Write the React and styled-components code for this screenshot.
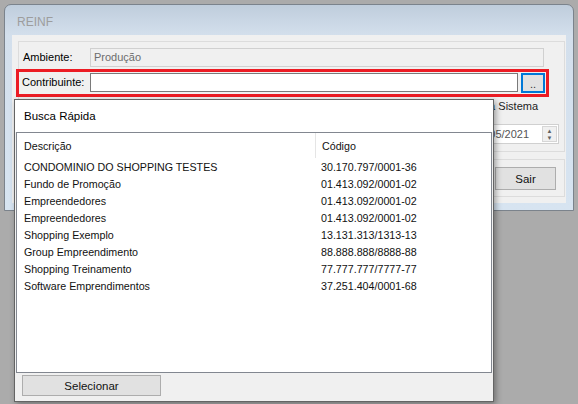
import styled, { createGlobalStyle } from "styled-components";

const GlobalStyle = createGlobalStyle`
  html, body { margin: 0; padding: 0; background: #ababab; }
  body {
    font-family: "Liberation Sans", Arial, sans-serif;
    font-size: 11px;
    color: #000;
  }
  * { box-sizing: border-box; }
`;

const companies = [
  ["CONDOMINIO DO SHOPPING TESTES", "30.170.797/0001-36"],
  ["Fundo de Promoção", "01.413.092/0001-02"],
  ["Empreendedores", "01.413.092/0001-02"],
  ["Empreendedores", "01.413.092/0001-02"],
  ["Shopping Exemplo", "13.131.313/1313-13"],
  ["Group Empreendimento", "88.888.888/8888-88"],
  ["Shopping Treinamento", "77.777.777/7777-77"],
  ["Software Emprendimentos", "37.251.404/0001-68"],
];

const Desktop = styled.div`
  position: relative;
  width: 578px;
  height: 404px;
  padding: 4px;
  overflow: hidden;
`;

const Window = styled.div`
  width: 570px;
  height: 207px;
  border: 1px solid #7b838c;
  border-radius: 7px 7px 0 0;
  background: linear-gradient(#bfcddc 0, #d3dfec 30px, #d7e4f1 100%);
  display: flex;
  flex-direction: column;
  padding: 0 7px 7px;
`;

const TitleBar = styled.div`
  height: 30px;
  display: flex;
  align-items: center;
  padding: 4px 0 0 5px;
  font-size: 12px;
  color: #9d9d9d;
`;

const Client = styled.div`
  flex: 1;
  background: #f0f0f0;
  padding: 6px 1px 6px 6px;
  display: flex;
  flex-direction: column;
  gap: 7px;
`;

const GroupBox = styled.div`
  border: 1px solid #dcdcdc;
  height: ${(p) => p.$h}px;
  display: flex;
  flex-direction: column;
`;

const FieldRow = styled.div`
  display: flex;
  align-items: flex-start;
  margin-top: ${(p) => p.$top}px;
  margin-right: ${(p) => (p.$highlight ? 18 : 0)}px;
  padding: ${(p) => (p.$highlight ? "1px 0 0 3px" : "0 0 0 4px")};
  height: ${(p) => (p.$highlight ? 22 : 19)}px;
  outline: ${(p) => (p.$highlight ? "3px solid #ec1c24" : "none")};
  gap: 3px;
`;

const Label = styled.div`
  width: ${(p) => p.$w}px;
  height: 19px;
  line-height: 19px;
  flex-shrink: 0;
`;

const TextBox = styled.div`
  width: ${(p) => p.$w}px;
  flex-shrink: 0;
  height: 19px;
  border: 1px solid ${(p) => (p.$disabled ? "#d0d0d0" : "#7a7a7a")};
  background: ${(p) => (p.$disabled ? "#f0f0f0" : "#fff")};
  color: #6d6d6d;
  line-height: 17px;
  padding-left: 3px;
  font-size: 11px;
`;

const DotsButton = styled.div`
  width: 24px;
  height: 20px;
  flex-shrink: 0;
  border: 2px solid #0078d7;
  background: #e1e1e1;
  display: flex;
  align-items: flex-end;
  justify-content: center;
  padding-bottom: 3px;
  font-size: 11px;
  line-height: 8px;
  color: #333;
`;

const SideColumn = styled.div`
  margin: 6px 0 0 451px;
  width: 89px;
  display: flex;
  flex-direction: column;
  gap: 11px;
`;

const SideLabel = styled.div`
  height: 13px;
  line-height: 13px;
  padding-left: 2px;
  color: #222;
  white-space: nowrap;
`;

const DateBox = styled.div`
  height: 20px;
  width: 89px;
  border: 1px solid #d0d0d0;
  background: #fff;
  display: flex;
  align-items: center;
  justify-content: space-between;
  padding: 0 1px 0 3px;
  color: #555;
`;

const Spinner = styled.div`
  width: 15px;
  height: 16px;
  border: 1px solid #d6d6d6;
  background: #f0f0f0;
  display: flex;
  flex-direction: column;
  align-items: center;
  justify-content: space-around;
  font-size: 6px;
  line-height: 6px;
  color: #606060;
`;

const LowerContent = styled.div`
  display: flex;
  justify-content: flex-end;
  padding: 7px 8px 0 0;
`;

const WinButton = styled.div`
  width: ${(p) => p.$w}px;
  height: ${(p) => p.$h}px;
  border: 1px solid #adadad;
  background: #e1e1e1;
  display: flex;
  align-items: center;
  justify-content: center;
  font-size: 11.5px;
  color: #111;
`;

const Popup = styled.div`
  position: absolute;
  left: 14px;
  top: 99px;
  width: 480px;
  height: 303px;
  border: 1px solid #646464;
  background: #f0f0f0;
  box-shadow: 2px 2px 6px rgba(0, 0, 0, 0.35);
  display: flex;
  flex-direction: column;
`;

const PopupHeader = styled.div`
  height: 32px;
  background: #fff;
  display: flex;
  align-items: center;
  padding-left: 9px;
  font-size: 11.5px;
`;

const List = styled.div`
  margin: 0 1px;
  height: 241px;
  border: 1px solid #828790;
  background: #fff;
`;

const Row = styled.div`
  display: grid;
  grid-template-columns: 298px 1fr;
  height: ${(p) => (p.$head ? 25 : 17)}px;
  align-items: center;
  font-size: 10.7px;
  color: #111;
`;

const Cell = styled.div`
  height: 100%;
  display: flex;
  align-items: center;
  padding-left: ${(p) => (p.$code ? 6 : 7)}px;
  border-left: ${(p) => (p.$divider ? "1px solid #e5e5e5" : "none")};
  white-space: nowrap;
`;

const Footer = styled.div`
  padding: 2px 0 0 7px;
`;

export default function App() {
  return (
    <>
      <GlobalStyle />
      <Desktop>
        <Window>
          <TitleBar>REINF</TitleBar>
          <Client>
            <GroupBox $h={111}>
              <FieldRow $top={6}>
                <Label $w={64}>Ambiente:</Label>
                <TextBox $w={454} $disabled>
                  Produção
                </TextBox>
              </FieldRow>
              <FieldRow $top={5} $highlight>
                <Label $w={65}>Contribuinte:</Label>
                <TextBox $w={428} />
                <DotsButton>..</DotsButton>
              </FieldRow>
              <SideColumn>
                <SideLabel>Data Sistema</SideLabel>
                <DateBox>
                  <span>01/05/2021</span>
                  <Spinner>
                    <span>▲</span>
                    <span>▼</span>
                  </Spinner>
                </DateBox>
              </SideColumn>
            </GroupBox>
            <GroupBox $h={38}>
              <LowerContent>
                <WinButton $w={61} $h={23}>Sair</WinButton>
              </LowerContent>
            </GroupBox>
          </Client>
        </Window>

        <Popup>
          <PopupHeader>Busca Rápida</PopupHeader>
          <List>
            <Row $head>
              <Cell>Descrição</Cell>
              <Cell $code $divider>Código</Cell>
            </Row>
            {companies.map(([name, code], i) => (
              <Row key={i}>
                <Cell>{name}</Cell>
                <Cell $code>{code}</Cell>
              </Row>
            ))}
          </List>
          <Footer>
            <WinButton $w={139} $h={21}>Selecionar</WinButton>
          </Footer>
        </Popup>
      </Desktop>
    </>
  );
}
